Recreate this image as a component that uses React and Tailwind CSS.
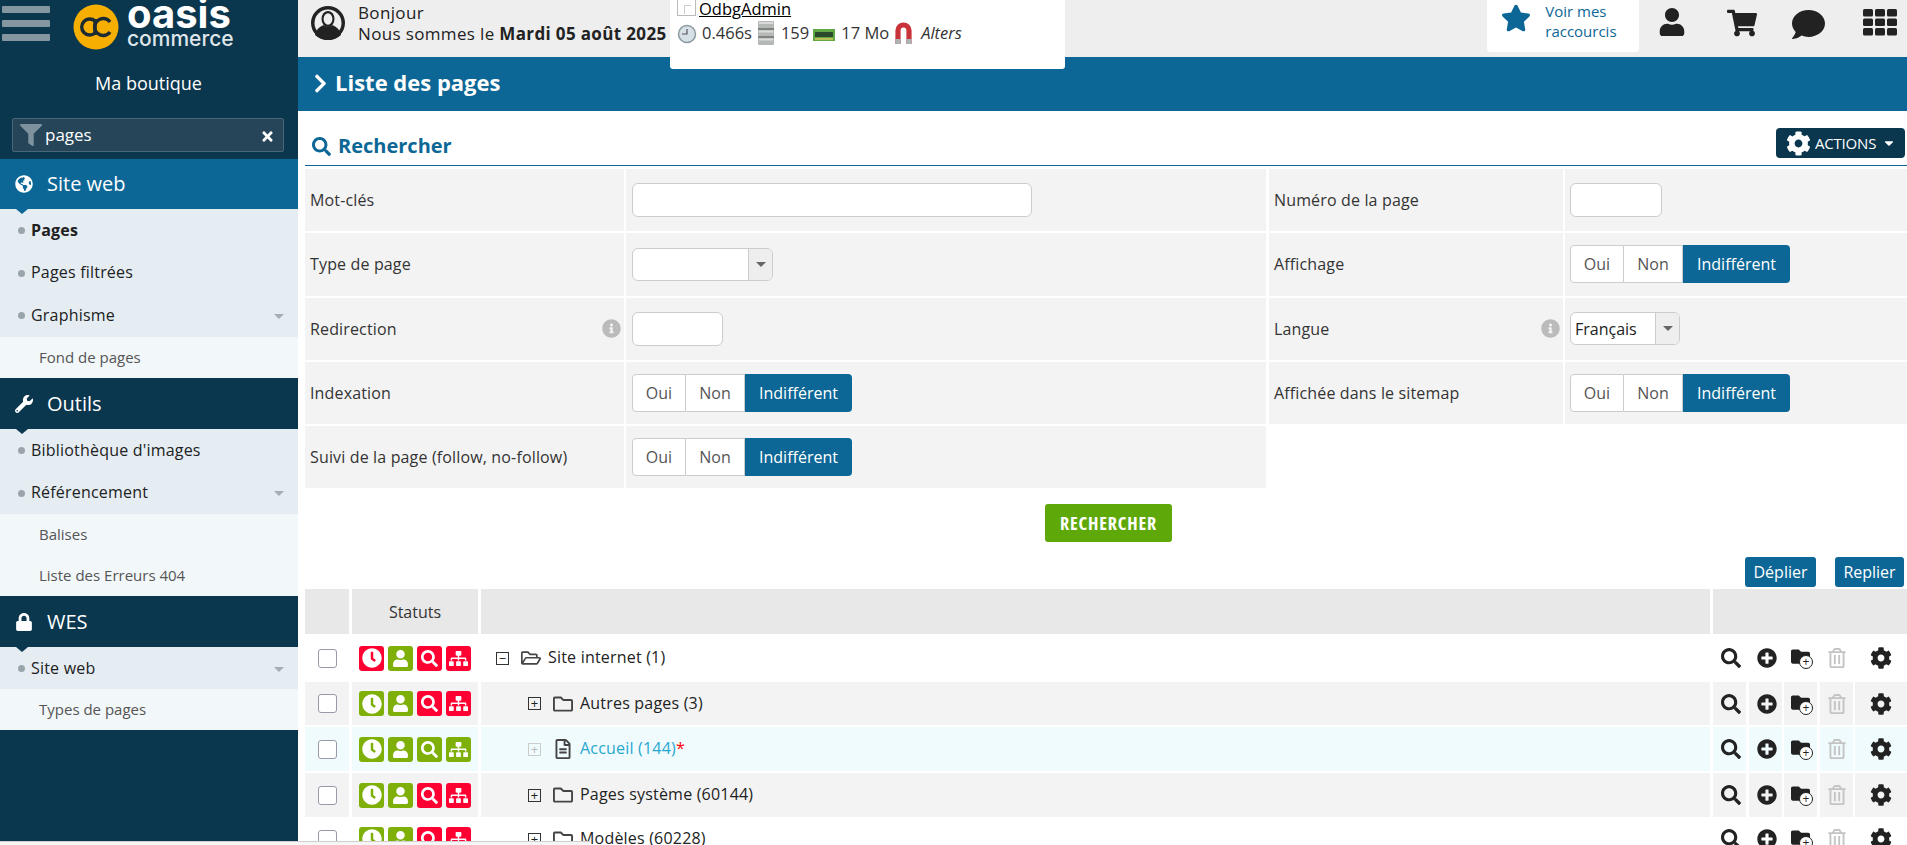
import React from "react";
import { FaGlobeAmericas, FaWrench, FaLock, FaFilter, FaTimes, FaChevronRight, FaSearch, FaCog, FaStar, FaUser, FaShoppingCart, FaComment, FaInfoCircle, FaPlusCircle, FaCaretDown, FaRegTrashAlt, FaRegFolder, FaRegFolderOpen, FaRegFileAlt, FaClock, FaSitemap, FaFolder } from "react-icons/fa";

const F = { fontFamily: '"Open Sans", sans-serif' };

function Logo() {
  return (
    <div className="flex items-start h-[50px] overflow-hidden">
      <svg width="46" height="46" viewBox="0 0 46 46" className="mt-[4px] shrink-0">
        <circle cx="23" cy="23" r="22.5" fill="#f6ae00" />
        <path d="M22 17 a8 8 0 1 0 0 12 M22 15 v16" fill="none" stroke="#1c2b33" strokeWidth="3.4" />
        <path d="M37 18 a8.5 8.5 0 1 0 0 10" fill="none" stroke="#1c2b33" strokeWidth="3.4" />
      </svg>
      <div className="ml-[8px] flex flex-col items-start text-white w-[108px]">
        <span className="text-[40px] leading-[30px] font-bold mt-[-1px]" style={{ fontFamily: "Inter, sans-serif" }}>oasis</span>
        <span className="text-[21px] leading-[16px] mt-[2px] font-medium text-[#dfe6ea]" style={{ fontFamily: "Inter, sans-serif" }}>commerce</span>
      </div>
    </div>
  );
}

function SideHead({ icon, label, blue, h }) {
  return (
    <div className={`relative flex items-center ${h} ${blue ? "bg-[#0d6796]" : "bg-[#0a364e]"}`}>
      <span className="w-[47px] flex justify-center text-white text-[18px]">{icon}</span>
      <span className="text-white text-[20px]">{label}</span>
      <span className={`absolute left-[16px] top-full w-0 h-0 border-x-[6px] border-x-transparent border-t-[5px] z-10 ${blue ? "border-t-[#0d6796]" : "border-t-[#0a364e]"}`} />
    </div>
  );
}

function SideItem({ label, bold, caret, h = "h-[42.5px]" }) {
  return (
    <div className={`relative flex items-center ${h} bg-[#e5edf3] pl-[18px] pr-[14px]`}>
      <span className="w-[7px] h-[7px] rounded-full bg-[#9aa5ab] mr-[6px] mt-[1px]" />
      <span className={`text-[16px] tracking-[0.2px] text-[#212121] -mt-[1px] ${bold ? "font-bold" : ""}`}>{label}</span>
      {caret && <span className="ml-auto mt-[2px] w-0 h-0 border-x-[5px] border-x-transparent border-t-[5px] border-t-[#a3adb3]" />}
    </div>
  );
}

function SideSub({ label, h = "h-[41px]" }) {
  return <div className={`flex items-center ${h} bg-[#f2f7fa] pl-[39px] text-[15px] text-[#555]`}>{label}</div>;
}

function Sidebar() {
  return (
    <aside className="w-[298px] shrink-0 bg-[#0a364e] h-[841px] flex flex-col">
      <div className="relative h-[50px]">
        <div className="absolute left-[2px] top-[6px] w-[48px] flex flex-col gap-[7px]">
          <span className="h-[7px] rounded-[1px] bg-[#84969f]" />
          <span className="h-[7px] rounded-[1px] bg-[#84969f]" />
          <span className="h-[7px] rounded-[1px] bg-[#84969f]" />
        </div>
        <div className="pl-[73px]"><Logo /></div>
      </div>
      <div className="text-center text-white text-[18px] leading-[24px] mt-[21px] mb-[1px] pr-[1px]">Ma boutique</div>
      <div className="ml-[12px] mr-[14px] mt-[22px] h-[34px] bg-[#264559] border border-[#4a6678] rounded-[2px] flex items-center pl-[7px] pr-[8px]">
        <FaFilter className="text-[#7e929e] text-[22px]" />
        <span className="text-white text-[17px] ml-[3px] -mt-[1px]">pages</span>
        <FaTimes className="ml-auto text-white text-[15px] mt-[2px]" />
      </div>
      <div className="h-[7px]" />
      <SideHead blue h="h-[50px]" icon={<FaGlobeAmericas />} label="Site web" />
      <SideItem bold label="Pages" />
      <SideItem label="Pages filtrées" />
      <SideItem caret label="Graphisme" />
      <SideSub label="Fond de pages" />
      <div className="h-[0.5px]" />
      <SideHead h="h-[51px]" icon={<FaWrench />} label="Outils" />
      <SideItem label="Bibliothèque d'images" />
      <SideItem caret label="Référencement" />
      <SideSub label="Balises" />
      <SideSub label="Liste des Erreurs 404" />
      <div className="h-[1px]" />
      <SideHead h="h-[50px]" icon={<FaLock />} label="WES" />
      <SideItem caret label="Site web" h="h-[42px]" />
      <SideSub label="Types de pages" />
    </aside>
  );
}

function DebugPanel() {
  return (
    <div className="absolute left-[372px] top-0 w-[395px] h-[69px] bg-white rounded-b-[3px] z-20 text-[16.5px] text-[#333] pl-[7px]">
      <div className="flex items-end h-[16px] leading-[14px]">
        <span className="relative w-[19px] h-[20px] border border-[#bbb] bg-white mr-[3px] shrink-0">
          <span className="absolute left-[6px] top-[8px] w-[7px] h-[9px] border-l border-t border-[#ccc]" />
        </span>
        <span className="underline text-black text-[16.5px]">OdbgAdmin</span>
      </div>
      <div className="flex items-center h-[24px] mt-[5px]">
        <svg width="20" height="22" viewBox="0 0 20 22" className="mr-[5px] shrink-0"><circle cx="10" cy="12" r="8.5" fill="#d7e0e4" stroke="#8b9aa3" strokeWidth="1.5" /><path d="M10 7v5H5" stroke="#556" strokeWidth="1.2" fill="none" /></svg>
        <span>0.466s</span>
        <svg width="16" height="24" viewBox="0 0 16 24" className="ml-[6px] mr-[7px] shrink-0"><rect width="16" height="24" rx="1" fill="#b4b9b6" /><path d="M0 8h16M0 16h16" stroke="#6d7370" strokeWidth="1.5" /><rect x="1" y="1" width="14" height="2" fill="#d9dcda" /><rect x="1" y="9.5" width="14" height="2" fill="#d9dcda" /><rect x="1" y="17.5" width="14" height="2" fill="#d9dcda" /></svg>
        <span>159</span>
        <svg width="22" height="12" viewBox="0 0 22 12" className="ml-[4px] mr-[6px] mt-[3px] shrink-0"><rect width="22" height="12" fill="#62a844" /><rect x="2" y="3" width="18" height="5" fill="#2b4a2b" /><path d="M2 10h18" stroke="#d5c95a" strokeWidth="1.5" /></svg>
        <span>17 Mo</span>
        <svg width="17" height="22" viewBox="0 0 17 22" className="ml-[6px] mr-[9px] shrink-0"><path d="M3 22V8.5a5.5 5.5 0 0 1 11 0V22" fill="none" stroke="#c8333a" strokeWidth="5.2" /><path d="M0.4 19.5h5.2M11.4 19.5h5.2" stroke="#aeb2b4" strokeWidth="5" /></svg>
        <span className="italic">Alters</span>
      </div>
    </div>
  );
}

function Avatar() {
  return (
    <svg width="34" height="34" viewBox="0 0 34 34" className="ml-[13px] mt-[6px] shrink-0">
      <circle cx="17" cy="17" r="17" fill="#222" />
      <circle cx="17" cy="17" r="13.5" fill="#eee" />
      <ellipse cx="17" cy="13" rx="6.5" ry="8" fill="#222" />
      <ellipse cx="17" cy="13" rx="4.4" ry="5.8" fill="#eee" />
      <path d="M4 29c2-8 7-9 9-10 2 2 6 2 8 0 2 1 7 2 9 10-3 3-8 5-13 5s-10-2-13-5z" fill="#222" />
    </svg>
  );
}

function Grid() {
  const xs = [0, 12, 24];
  const ys = [0, 9.5, 19];
  return (
    <svg width="34" height="27" viewBox="0 0 34 27" className="ml-[38px] mt-[9px] mr-[10px] shrink-0">
      {ys.map((y) => xs.map((x) => <rect key={`${x}-${y}`} x={x} y={y} width="10" height="7.5" rx="1.5" fill="#222" />))}
    </svg>
  );
}

function TopBar() {
  return (
    <header className="relative h-[57px] bg-[#eeeeee] flex">
      <Avatar />
      <div className="ml-[13px] mt-[2px] text-[17px] tracking-[0.35px] leading-[21px] text-[#222]">
        <div>Bonjour</div>
        <div>Nous sommes le <b>Mardi 05 août 2025</b></div>
      </div>
      <DebugPanel />
      <div className="ml-auto flex items-start">
        <div className="w-[152px] h-[52px] bg-white rounded-b-[3px] flex items-start">
          <FaStar className="text-[#0d6796] text-[30px] ml-[14px] mt-[3px]" />
          <span className="ml-[14px] mt-[1px] text-[15px] leading-[20px] text-[#0d6796]">Voir mes<br />raccourcis</span>
        </div>
        <FaUser className="text-[#222] text-[28px] ml-[19px] mt-[8px]" />
        <FaShoppingCart className="text-[#222] text-[30px] ml-[40.5px] mt-[8px]" />
        <FaComment className="text-[#222] text-[33px] ml-[35.25px] mt-[8px]" />
        <Grid />
      </div>
    </header>
  );
}

function Toggle() {
  return (
    <div className="flex h-[38px] text-[16px]">
      <span className="w-[54px] flex items-center justify-center bg-white border border-[#ccc] rounded-l-[4px] text-[#555]">Oui</span>
      <span className="w-[59px] flex items-center justify-center bg-white border-y border-r border-[#ccc] text-[#555]">Non</span>
      <span className="w-[107px] flex items-center justify-center bg-[#0d6796] text-white rounded-r-[4px]">Indifférent</span>
    </div>
  );
}

function Input({ w }) {
  return <div className={`${w} h-[34px] bg-white border border-[#ccc] rounded-[6px]`} />;
}

function Select({ w, label }) {
  return (
    <div className={`${w} h-[33px] bg-white border border-[#ccc] rounded-[6px] flex items-center overflow-hidden`}>
      <span className="flex-1 text-[16px] text-[#222] pl-[4px]">{label}</span>
      <span className="w-[24px] h-full bg-[#eee] border-l border-[#ccc] flex items-center justify-center">
        <span className="w-0 h-0 border-x-[5px] border-x-transparent border-t-[5px] border-t-[#666]" />
      </span>
    </div>
  );
}

function Info() {
  return <FaInfoCircle className="text-[#bbb] text-[19px] ml-auto mr-[3px]" />;
}

function FormRow({ lLabel, lInfo, lControl, rLabel, rInfo, rControl }) {
  return (
    <div className="flex gap-[2px] h-[62.25px] text-[16px] tracking-[0.15px] text-[#333]">
      <div className="w-[319px] bg-[#f3f3f3] flex items-center pl-[5px]">{lLabel}{lInfo && <Info />}</div>
      <div className="w-[640px] bg-[#f3f3f3] flex items-center pl-[6px] tracking-normal">{lControl}</div>
      {rLabel ? (
        <>
          <div className="w-[294px] ml-[1px] bg-[#f3f3f3] flex items-center pl-[5px]">{rLabel}{rInfo && <Info />}</div>
          <div className="flex-1 bg-[#f3f3f3] flex items-center pl-[5px] tracking-normal">{rControl}</div>
        </>
      ) : null}
    </div>
  );
}

function Badge({ on, children }) {
  return <span className={`w-[25px] h-[25px] rounded-[3px] flex items-center justify-center text-white shrink-0 ${on ? "bg-[#7fb00a]" : "bg-[#ff0033]"}`}>{children}</span>;
}

function FolderPlus() {
  return (
    <span className="relative inline-block w-[22px] h-[22px]">
      <FaFolder className="text-[#222] text-[19px] absolute left-0 top-0" />
      <span className="absolute right-0 bottom-0 w-[14px] h-[14px] bg-white border border-[#222] rounded-full flex items-center justify-center text-[12px] leading-none text-[#222]">+</span>
    </span>
  );
}

function Actions({ bg }) {
  const cell = `flex items-center justify-center h-full w-[33px] ${bg}`;
  return (
    <div className="flex h-full text-[#222]">
      <span className={`${cell} pl-[3px] mr-[3px]`}><FaSearch className="text-[20px]" /></span>
      <span className={`${cell} pl-[3px] mr-[2px]`}><FaPlusCircle className="text-[20px]" /></span>
      <span className={`${cell} pl-[3px] mr-[3px]`}><FolderPlus /></span>
      <span className={`${cell} pl-[1px] mr-[2px]`}><FaRegTrashAlt className="text-[20px] text-[#c4c4c4]" /></span>
      <span className={`flex items-center justify-center h-full flex-1 ${bg}`}><FaCog className="text-[22px]" /></span>
    </div>
  );
}

function TreeBox({ minus, faint }) {
  const c = faint ? "border-[#ccc] text-[#bbb]" : "border-[#333] text-[#222]";
  return <span className={`w-[13px] h-[13px] border ${c} flex items-center justify-center text-[13px] leading-none shrink-0`}>{minus ? "−" : "+"}</span>;
}

function TreeRow({ s, icon, label, color, star, bg, h, indent, minus, faint }) {
  return (
    <div className={`flex gap-[3px] ${h}`}>
      <div className={`w-[44px] flex items-center justify-center ${bg}`}>
        <span className="w-[19px] h-[19px] bg-white border border-[#99a] rounded-[3px]" />
      </div>
      <div className={`w-[126px] flex items-center gap-[4px] pl-[7px] ${bg}`}>
        <Badge on={s[0]}><FaClock className="text-[20px]" /></Badge>
        <Badge on={s[1]}><FaUser className="text-[17px]" /></Badge>
        <Badge on={s[2]}><FaSearch className="text-[17px]" /></Badge>
        <Badge on={s[3]}><FaSitemap className="text-[19px]" /></Badge>
      </div>
      <div className={`w-[1229px] flex items-center ${bg} ${indent}`}>
        <TreeBox minus={minus} faint={faint} />
        <span className="ml-[11px] w-[21px] text-[#444] text-[20px] flex justify-center shrink-0">{icon}</span>
        <span className={`ml-[7px] text-[16px] tracking-[0.2px] ${color || "text-[#222]"} -mt-[2px]`}>{label}</span>
        {star && <span className="text-[16px] text-[#ff0000] -mt-[2px]">*</span>}
      </div>
      <div className="flex-1"><Actions bg={bg} /></div>
    </div>
  );
}

export default function App() {
  return (
    <div className="w-[1907px] h-[845px] overflow-hidden flex bg-white relative" style={F}>
      <Sidebar />
      <main className="flex-1 min-w-0 h-[845px] overflow-hidden">
        <TopBar />
        <div className="h-[54px] bg-[#0d6796] flex items-center pl-[12px] text-white">
          <FaChevronRight className="text-[21px] -mt-[2px]" />
          <span className="ml-[4px] text-[22px] font-bold -mt-[3px]">Liste des pages</span>
        </div>
        <div className="pl-[7px]">
          <div className="relative h-[55px] border-b border-[#0d6796] flex items-center pt-[16px] text-[#0d6796]">
            <FaSearch className="text-[19px] ml-[7px]" />
            <span className="ml-[7px] text-[20px] font-bold">Rechercher</span>
            <div className="absolute right-[2px] top-[17px] w-[129px] h-[30px] bg-[#0a364e] rounded-[4px] flex items-center pl-[10px] text-white">
              <FaCog className="text-[25px]" />
              <span className="ml-[4px] text-[15px] tracking-[-0.2px]">ACTIONS</span>
              <FaCaretDown className="ml-[6px] text-[14px]" />
            </div>
          </div>
          <div className="flex flex-col gap-[2px] mt-[3px]">
            <FormRow lLabel="Mot-clés" lControl={<Input w="w-[400px]" />} rLabel="Numéro de la page" rControl={<Input w="w-[92px]" />} />
            <FormRow lLabel="Type de page" lControl={<Select w="w-[141px]" />} rLabel="Affichage" rControl={<Toggle />} />
            <FormRow lLabel="Redirection" lInfo lControl={<Input w="w-[91px]" />} rLabel="Langue" rInfo rControl={<Select w="w-[110px]" label="Français" />} />
            <FormRow lLabel="Indexation" lControl={<Toggle />} rLabel="Affichée dans le sitemap" rControl={<Toggle />} />
            <FormRow lLabel="Suivi de la page (follow, no-follow)" lControl={<Toggle />} />
          </div>
          <div className="flex justify-center mt-[16px] pl-[5px]">
            <span className="w-[127px] h-[38px] bg-[#5ea80a] rounded-[3px] text-white font-bold text-[18px] tracking-[0.8px] flex items-center justify-center [font-stretch:85%]">RECHERCHER</span>
          </div>
          <div className="flex justify-end gap-[19px] pr-[3px] mt-[15px] h-[30px]">
            <span className="w-[71px] bg-[#0d6796] rounded-[3px] text-white text-[16px] flex items-center justify-center">Déplier</span>
            <span className="w-[69px] bg-[#0d6796] rounded-[3px] text-white text-[16px] flex items-center justify-center">Replier</span>
          </div>
          <div className="flex gap-[3px] h-[45px] mt-[2px] text-[16px] text-[#333]">
            <div className="w-[44px] bg-[#e8e8e8]" />
            <div className="w-[126px] bg-[#e8e8e8] flex items-center justify-center">Statuts</div>
            <div className="w-[1229px] bg-[#e8e8e8]" />
            <div className="flex-1 bg-[#e8e8e8]" />
          </div>
          <TreeRow h="h-[48px]" bg="bg-white" s={[0, 1, 0, 0]} indent="pl-[15px]" minus icon={<FaRegFolderOpen />} label="Site internet (1)" />
          <TreeRow h="h-[43px]" bg="bg-[#f3f3f3]" s={[1, 1, 0, 0]} indent="pl-[47px]" icon={<FaRegFolder />} label="Autres pages (3)" />
          <div className="h-[2px]" />
          <TreeRow h="h-[44px]" bg="bg-[#effbfd]" s={[1, 1, 1, 1]} indent="pl-[47px]" faint icon={<FaRegFileAlt />} label="Accueil (144)" color="text-[#2aa7cf]" star />
          <div className="h-[2px]" />
          <TreeRow h="h-[44px]" bg="bg-[#f3f3f3]" s={[1, 1, 0, 0]} indent="pl-[47px]" icon={<FaRegFolder />} label="Pages système (60144)" />
          <TreeRow h="h-[44px]" bg="bg-white" s={[1, 1, 0, 0]} indent="pl-[47px]" icon={<FaRegFolder />} label="Modèles (60228)" />
        </div>
      </main>
      <div className="absolute left-0 bottom-0 w-[590px] h-[4px] bg-[#f6f6f6] border-t border-[#cfcfcf] z-30" />
    </div>
  );
}
